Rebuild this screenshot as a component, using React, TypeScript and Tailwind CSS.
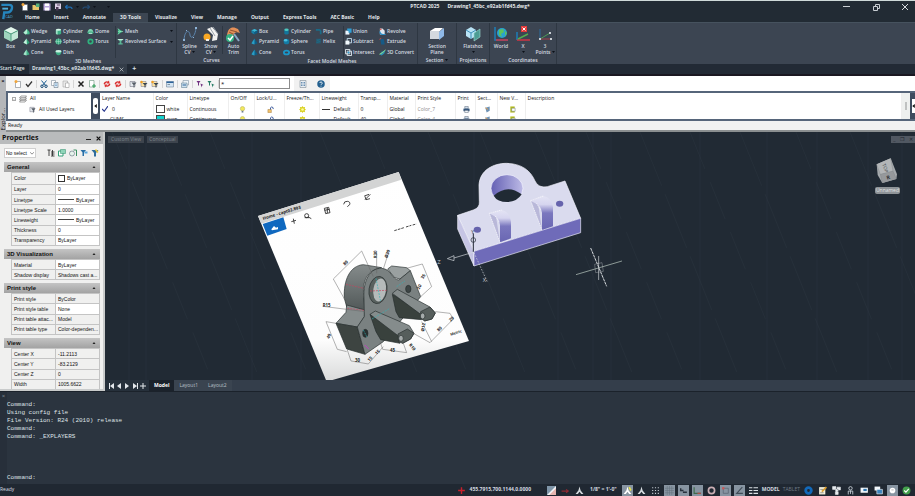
import React, { useState } from 'react';
import clsx from 'clsx';

const icons: Record<string, React.ReactNode> = {
  box: (
    <>
      <path d="M8 1 15 4.500 8 8 1 4.500Z" fill="#e2f6ec" />
      <path d="M1 4.500 8 8V15.500L1 12Z" fill="#9fd3bd" />
      <path d="M15 4.500 8 8V15.500L15 12Z" fill="#c3e8d8" />
      <path d="M8 8V15.500M1 4.500 8 8 15 4.500" stroke="#4d9f80" fill="none" />
    </>
  ),
  wedge: (
    <>
      <path d="M1 11 9 2 15 9V14L6 15Z" fill="#45b98d" />
      <path d="M9 2 10 12 6 15 1 11Z" fill="#b6ecd3" />
    </>
  ),
  pyramid: (
    <>
      <path d="M8 1 15 11 9 15 1 11Z" fill="#33a67c" />
      <path d="M8 1 9 15 1 11Z" fill="#c9f2e0" />
    </>
  ),
  cone: (
    <>
      <path d="M8 1 15 12Q8 17 1 12Z" fill="#43b288" />
      <path d="M8 1 8 15Q3 14 1 12Z" fill="#a5e3ca" />
    </>
  ),
  cylinder: (
    <>
      <path d="M2 4V13Q8 17 14 13V4Z" fill="#3fae86" />
      <path d="M2 4V13Q4 15 6 15V5Z" fill="#9ce0c4" />
      <ellipse cx="8" cy="4" rx="6" ry="2.500" fill="#d4f5e7" />
    </>
  ),
  sphere: (
    <>
      <circle cx="8" cy="8" r="7" fill="#3aa880" />
      <path d="M1 8H15M8 1V15M4 3Q1 8 4 13M12 3Q15 8 12 13" stroke="#b4ecd5" fill="none" />
    </>
  ),
  dish: (
    <>
      <path d="M1 5Q2 14 8 14T15 5Z" fill="#3fae86" />
      <ellipse cx="8" cy="5" rx="7" ry="3" fill="#ccf2e2" />
    </>
  ),
  dome: (
    <>
      <path d="M1 11Q2 2 8 2T15 11Z" fill="#7fd3b0" />
      <ellipse cx="8" cy="11" rx="7" ry="3" fill="#37a57c" />
      <path d="M4 12H12" stroke="#e0fff2" strokeWidth="2" />
    </>
  ),
  torus: <circle cx="8" cy="8" r="5" fill="none" stroke="#2fb27e" strokeWidth="4" />,
  mesh: (
    <>
      <path d="M2 1 14 8 2 15Z" fill="#37b37f" />
      <path d="M2 1 8 8 2 15M2 8H14" stroke="#c9f7e0" fill="none" />
    </>
  ),
  revolved: (
    <>
      <path d="M1 2H15L10 7V12H13V15H3V12H6V7Z" fill="#59b897" />
      <path d="M1 2H15L12 5H4Z" fill="#c5eedd" />
    </>
  ),
  fbox: (
    <>
      <path d="M8 2 15 5 8 9 1 5Z" fill="#39b9d8" />
      <path d="M1 5 8 9V15L1 11Z" fill="#157ea8" />
      <path d="M15 5 8 9V15L15 11Z" fill="#0d5d86" />
    </>
  ),
  fcone: (
    <>
      <path d="M8 1 15 12Q8 17 1 12Z" fill="#0d5d86" />
      <path d="M8 1V15Q3 14 1 12Z" fill="#2c9dc4" />
    </>
  ),
  fcylinder: (
    <>
      <path d="M3 4V13Q8 17 13 13V4Z" fill="#13759c" />
      <ellipse cx="8" cy="4" rx="5" ry="3" fill="#4dc7c0" />
    </>
  ),
  fsphere: (
    <>
      <circle cx="8" cy="8" r="6.500" fill="#147ba4" />
      <ellipse cx="6" cy="5" rx="4" ry="3" fill="#48bfe0" />
    </>
  ),
  ftorus: <ellipse cx="8" cy="8" rx="6" ry="4.500" fill="none" stroke="#1a96c9" strokeWidth="4" />,
  fpipe: <path d="M2 4H10Q13 4 13 8V14" fill="none" stroke="#1a6b88" strokeWidth="4" />,
  fhelix: <path d="M3 3H13L3 7H13L3 11H13" fill="none" stroke="#1a6b88" strokeWidth="2" />,
  union: (
    <>
      <rect x="1" y="6" width="9" height="9" fill="#eaf6ff" />
      <path d="M5 1H15V11H8V6H5Z" fill="#2f9fd6" />
    </>
  ),
  subtract: (
    <>
      <path d="M5 1H15V11H5Z" fill="none" stroke="#cde6f4" strokeWidth="2" />
      <rect x="1" y="6" width="9" height="9" fill="#f3fbff" />
    </>
  ),
  intersect: (
    <>
      <path d="M1 1H11V11H1Z M5 5H15V15H5Z" fill="none" stroke="#eef7fc" strokeWidth="2" />
      <path d="M6 6H10V10H6Z" fill="#2fa0d8" />
    </>
  ),
  revolve: (
    <>
      <path d="M2 1H8L13 6V15H2Z" fill="#dfe6ee" />
      <path d="M2 8Q2 15 10 15H15" fill="none" stroke="#2b8fc8" strokeWidth="3" />
      <circle cx="4" cy="3" r="2" fill="#d25a5a" />
    </>
  ),
  extrude: (
    <>
      <path d="M3 2H11L13 15H5Z" fill="#155a86" />
      <path d="M1 3 5 1" stroke="#d45050" strokeWidth="2" />
    </>
  ),
  convert: (
    <>
      <path d="M1 12 6 6 15 2 12 10 6 15Z" fill="#2a92b8" />
      <path d="M1 12 7 9 15 2" stroke="#9be27c" strokeWidth="2" fill="none" />
    </>
  ),
  spline: (
    <>
      <path d="M2 14C3 2 8 5 8 9S13 12 14 2" stroke="#5d87b0" fill="none" />
      <path d="M1 13h2v2H1ZM13 1h2v2h-2ZM4 4h1v1H4ZM11 11h1v1h-1Z" fill="#8fb5d8" />
    </>
  ),
  show: (
    <>
      <path d="M4 3 9 1 15 8 14 14 9 15 10 9Z" fill="#f4f4f2" />
      <path d="M7 2 12 10M10 1 15 8" stroke="#9aa3ac" fill="none" />
      <circle cx="4" cy="11" r="3.500" fill="#f8a824" />
      <path d="M3 13h3v2H3Z" fill="#eee" />
    </>
  ),
  trim: (
    <>
      <path d="M2 9C3 1 8 0 13 3L15 7C10 5 8 8 8 13Z" fill="#e39059" />
      <path d="M5 4 12 6M4 6 10 9" stroke="#8d5332" fill="none" />
      <path d="M9 8 14 15" stroke="#8aa7c8" strokeWidth="2" />
      <circle cx="5" cy="12" r="4" fill="#35b284" />
      <path d="M3 12 5 14 8 10" fill="none" stroke="#fff" strokeWidth="1.500" />
    </>
  ),
  section: (
    <>
      <path d="M1 5 6 2H14L10 6Z" fill="#fff" />
      <path d="M1 5H10V13H1Z" fill="#d4d9df" />
      <path d="M10 6 15 2V10L10 14Z" fill="#8fb9e8" />
    </>
  ),
  flatshot: (
    <>
      <path d="M1 4 6 1 11 4V10L6 13 1 10Z" fill="#b9e3f5" />
      <path d="M1 4 6 7 11 4M6 7V13" stroke="#3e8fb8" fill="none" />
      <path d="M9 7 15 3V11L9 15Z" fill="#4d9c94" stroke="#9fdcd3" strokeWidth=".6" />
    </>
  ),
  world: (
    <>
      <path d="M2 1V14H15" stroke="#1c7eb8" strokeWidth="1.500" fill="none" />
      <path d="M3 14H15" stroke="#cf3444" strokeWidth="1.500" />
      <circle cx="9" cy="7" r="5" fill="#2aa3cf" />
      <path d="M6 4 10 3 11 6 8 8 9 11 6 9ZM12 5 14 7 12 10Z" fill="#5cc25e" />
    </>
  ),
  ucsx: (
    <>
      <path d="M2 6V14" stroke="#1c7eb8" strokeWidth="1.500" />
      <path d="M2 14H15" stroke="#cf3444" strokeWidth="1.500" />
      <path d="M3 13 13 8" stroke="#53ad4e" strokeWidth="1.500" />
      <path d="M6 0H12V6H6Z" fill="#e33a3a" />
      <path d="M7.500 1.500 10.500 4.500M10.500 1.500 7.500 4.500" stroke="#fff" />
    </>
  ),
  ucs3: (
    <>
      <path d="M3 3V13" stroke="#2c6c9c" />
      <path d="M3 13H14" stroke="#a34048" />
      <path d="M3 13 13 7" stroke="#4d9a55" />
      <path d="M2 12h2v2H2ZM13 12h2v2h-2ZM12 6h2v2h-2Z" fill="#c6ccd2" />
    </>
  ),
  newfile: (
    <>
      <path d="M3 3H13V15H3Z" fill="#fff" stroke="#5f6770" />
      <circle cx="4" cy="3" r="3" fill="#f2a63a" />
    </>
  ),
  open: (
    <>
      <path d="M1 4H6L8 6H14V14H1Z" fill="#e7c66a" />
      <path d="M8 1H15V8H8Z" fill="#58b07a" />
    </>
  ),
  save: (
    <>
      <path d="M1 1H15V15H1Z" fill="#bba9dc" />
      <path d="M4 1H12V6H4ZM4 9H12V15H4Z" fill="#fff" />
    </>
  ),
  saveas: (
    <>
      <path d="M2 1H14V12H2Z" fill="#d9cde2" />
      <path d="M4 8H9V15H4Z" fill="#4a3a55" />
      <path d="M6 4H12" stroke="#584862" strokeWidth="2" />
    </>
  ),
  undo: <path d="M5 4 1 8 5 12M1 8H10Q14 8 14 12" fill="none" stroke="#1f6cb0" strokeWidth="2.500" />,
  redo: <path d="M11 4 15 8 11 12M15 8H6Q2 8 2 12" fill="none" stroke="#234a70" strokeWidth="2.500" />,
  check: <path d="M2 8 6 13 14 3" fill="none" stroke="#333" strokeWidth="2.500" />,
  cut: (
    <>
      <path d="M3 1 11 11M13 1 5 11" stroke="#1d5f94" strokeWidth="2" />
      <circle cx="4" cy="12.500" r="2.500" fill="none" stroke="#174a75" strokeWidth="2" />
      <circle cx="12" cy="12.500" r="2.500" fill="none" stroke="#174a75" strokeWidth="2" />
    </>
  ),
  copy: (
    <>
      <path d="M1 1H9V11H1Z" fill="#fff" stroke="#68788a" />
      <path d="M6 5H14V15H6Z" fill="#dcebf8" stroke="#567" />
      <path d="M8 8H12M8 11H12" stroke="#4a83b5" />
    </>
  ),
  paste: (
    <>
      <path d="M2 2H11V14H2Z" fill="#e9e9e9" stroke="#999" />
      <path d="M7 6H14V15H7Z" fill="#fff" stroke="#888" />
    </>
  ),
  del: <path d="M3 3 13 13M13 3 3 13" stroke="#222" strokeWidth="3" />,
  addpage: (
    <>
      <path d="M3 1H12V14H3Z" fill="#fff" stroke="#4d7c63" />
      <path d="M8 12H16M12 8V16" stroke="#2d9c55" strokeWidth="2" />
    </>
  ),
  regen: (
    <>
      <path d="M1 8Q3 1 10 3L12 1 13 7 7 7 9 5Q5 4 4 9Z" fill="#d92b2b" />
      <path d="M15 8Q13 15 6 13L4 15 3 9 9 9 7 11Q11 12 12 7Z" fill="#d92b2b" />
    </>
  ),
  funnel: (
    <>
      <path d="M2 3H12V13H2Z" fill="#e5e9ee" stroke="#667" />
      <path d="M5 5H15L11 10V15H9V10Z" fill="#555d66" />
    </>
  ),
  funnelstar: (
    <>
      <path d="M2 3H12V13H2Z" fill="#fbe2a6" stroke="#778" />
      <path d="M5 6H15L11 10V15H9V10Z" fill="#35424f" />
      <circle cx="3" cy="4" r="2.500" fill="#f19d20" />
    </>
  ),
  panel: (
    <>
      <path d="M1 3H15V14H1Z" fill="#d3e4f2" stroke="#5b7288" />
      <path d="M1 3H15V6H1Z" fill="#2c639a" />
      <path d="M3 9H8" stroke="#345" />
    </>
  ),
  merge: (
    <>
      <path d="M4 1H15V10H4Z" fill="#eef4f8" stroke="#6c8394" />
      <path d="M1 6H12V15H1Z" fill="#cfe2ee" stroke="#4f7088" />
      <path d="M3 10H10" stroke="#2c639a" strokeWidth="2" />
    </>
  ),
  sheetlist: (
    <>
      <path d="M2 1H14V15H2Z" fill="#e8edf2" stroke="#6a7885" />
      <path d="M4 5H7M4 8H7M4 11H7M9 5H12M9 8H12M9 11H12" stroke="#3f6f9c" strokeWidth="1.500" />
    </>
  ),
  pickp: <path d="M1 2H9L6 6V11H4V6ZM9 7 15 10 12 11 11 15Z" fill="#703080" />,
  pickg: <path d="M1 2H9L6 6V11H4V6ZM9 7 15 10 12 11 11 15Z" fill="#227a62" />,
  help: (
    <>
      <circle cx="8" cy="8" r="7.500" fill="#24608f" />
      <path d="M5.500 6Q6 3.500 8.500 4T10 7.500L8 9.500M8 11.500V13" fill="none" stroke="#fff" strokeWidth="1.800" />
    </>
  ),
  layers: (
    <>
      <path d="M4 2H15L12 6H1Z" fill="#fff" stroke="#444" />
      <path d="M1 10 4 6H15L12 10ZM1 14 4 10H15L12 14Z" fill="#fff" stroke="#444" />
    </>
  ),
  bulb: (
    <>
      <circle cx="8" cy="6" r="5" fill="#f2e85c" stroke="#a8a04a" />
      <path d="M6 11H10V15H6Z" fill="#6e7f8d" />
    </>
  ),
  lock: (
    <>
      <path d="M2 8H10V15H2Z" fill="#f1c16b" stroke="#9c7430" />
      <path d="M8 8V4Q11 0 14 4V7" fill="none" stroke="#2d4d92" strokeWidth="2" />
    </>
  ),
  sun: (
    <>
      <path d="M8 0 10 3 14 2 13 6 16 8 13 10 14 14 10 13 8 16 6 13 2 14 3 10 0 8 3 6 2 2 6 3Z" fill="#d9d01e" />
      <circle cx="8" cy="8" r="3" fill="#fffb9a" />
    </>
  ),
  print: (
    <>
      <path d="M4 1H12V6H4Z" fill="#cfdcea" stroke="#456" />
      <path d="M1 6H15V12H1Z" fill="#35567e" />
      <path d="M4 10H12V15H4Z" fill="#f4f8fc" stroke="#456" />
    </>
  ),
  cutplane: (
    <>
      <path d="M3 4 13 1V11L6 15Z" fill="#6f93b5" />
      <path d="M3 4 9 8" stroke="#e79c4a" strokeWidth="2" />
    </>
  ),
  viewport: (
    <>
      <path d="M3 1H13V15H3Z" fill="#b5bd20" />
      <path d="M6 5H14V12H6Z" fill="#fff" stroke="#566" />
    </>
  ),
  tree: <path d="M1 2H7M4 2V14M8 6H15M8 10H15M8 14H15M11 2V14" stroke="#333" strokeWidth="1.800" fill="none" />,
  select: (
    <>
      <path d="M1 4H10V14H1Z" fill="#fff" stroke="#339f78" strokeWidth="2" />
      <path d="M5 1H15V9H5Z" fill="#8fd4b8" stroke="#2d8c6a" />
    </>
  ),
  quick: (
    <>
      <circle cx="6" cy="9" r="5" fill="#e6f3ec" stroke="#456" />
      <path d="M9 2H15V14" stroke="#3c8f62" strokeWidth="2" fill="none" />
    </>
  ),
  filter: (
    <>
      <path d="M1 2H12L8 7V14H5V7Z" fill="#286ea6" />
      <path d="M9 5H15V9H9Z" fill="#5aa6dc" />
    </>
  ),
  filtery: (
    <>
      <path d="M1 2H15L10 8V15H6V8Z" fill="#2f6d9d" />
      <path d="M9 1 14 7" stroke="#edc93c" strokeWidth="3" />
    </>
  ),
  cross: <path d="M8 2V14M2 8H14" stroke="#c8202c" strokeWidth="2.500" />,
  diag: (
    <>
      <path d="M0 0H16V16H0Z" fill="#f3f5f7" />
      <path d="M0 0H16L0 16Z" fill="#7f95a8" />
      <path d="M4 16 16 4V16Z" fill="#e6b5b0" />
    </>
  ),
  dot: <path d="M1 9H13M9 6 13 9 9 12" stroke="#8c2a32" strokeWidth="2" fill="none" />,
  anno: <path d="M8 1 10 8 15 14 11 14 8 10 5 14H1L6 8Z" fill="#d4dade" />,
  annoy: (
    <>
      <path d="M8 1 10 8 15 14 11 14 8 10 5 14H1L6 8Z" fill="#fff" />
      <path d="M11 2 14 8" stroke="#e8e14a" strokeWidth="3" />
    </>
  ),
  dots: <path d="M2 2h2v2H2ZM7 2h2v2H7ZM12 2h2v2h-2ZM2 7h2v2H2ZM7 7h2v2H7ZM12 7h2v2h-2ZM2 12h2v2H2ZM7 12h2v2H7ZM12 12h2v2h-2Z" fill="#c4ccd4" />,
  grid: <path d="M4 0V16M8 0V16M12 0V16M0 4H16M0 8H16M0 12H16" stroke="#66727f" />,
  ortho: <path d="M3 4V8H8M7 11H14" stroke="#27313d" strokeWidth="2.500" fill="none" />,
  polar: (
    <>
      <path d="M2 2V13H14" stroke="#3f6b4c" strokeWidth="2" fill="none" />
      <path d="M8 13H14" stroke="#bf4a4a" strokeWidth="2" />
    </>
  ),
  ring: <circle cx="8" cy="8" r="5.500" fill="none" stroke="#c9aeb4" strokeWidth="3" />,
  snap: (
    <>
      <path d="M4 4H13V13H4Z" stroke="#4b5663" fill="none" />
      <path d="M2 2H6V6H2Z" fill="#c95757" />
    </>
  ),
  angle: <path d="M13 2 3 13H14" fill="none" stroke="#414d59" strokeWidth="2" />,
  lines: <path d="M0 3H6M8 3H16M0 8H6M8 8H16M0 13H6M8 13H16" stroke="#dbe1e6" strokeWidth="2" />,
  gear: <circle cx="8" cy="8" r="5" fill="none" stroke="#1269ba" strokeWidth="5" />,
  note: (
    <>
      <path d="M2 2H13V15H2Z" fill="#f4f1dd" />
      <path d="M7 10 15 2" stroke="#dc9e2e" strokeWidth="3" />
      <path d="M4 6H9M4 12H10" stroke="#555" />
    </>
  ),
  links: <path d="M1 1H7V6H1ZM9 2H15V7H9ZM6 10H11V15H6ZM5 5 8 11 12 6" fill="#e8ecef" stroke="#e8ecef" />,
  person: (
    <>
      <circle cx="8" cy="4" r="3" fill="none" stroke="#cbd3da" strokeWidth="1.500" />
      <path d="M4 15V9H12V15M8 8V14" stroke="#cbd3da" strokeWidth="1.500" fill="none" />
    </>
  ),
  screen: (
    <>
      <path d="M1 3H14V12H1Z" fill="#f2f7fb" />
      <path d="M6 5H12V9H6Z" fill="#2c74ae" />
    </>
  ),
  screens: (
    <>
      <path d="M1 1H11V8H1Z" fill="#f2f7fb" />
      <path d="M5 6H15V14H5Z" fill="#3f85bd" stroke="#fff" />
    </>
  ),
  lamp: (
    <>
      <circle cx="8" cy="8" r="5" fill="#fff" />
      <path d="M6 7H10" stroke="#888" />
    </>
  ),
  ok: (
    <>
      <circle cx="8" cy="8" r="7" fill="#43a04c" />
      <path d="M4 8 7 11 12 5" stroke="#fff" strokeWidth="2" fill="none" />
    </>
  ),
};

const Icon: React.FC<{ name: string; className?: string }> = ({ name, className }) => (
  <svg viewBox="0 0 16 16" aria-hidden="true" className={clsx('shrink-0', className || 'size-2')}>
    {icons[name]}
  </svg>
);

const Caret: React.FC<{ className?: string }> = ({ className }) => (
  <svg viewBox="0 0 6 4" aria-hidden="true" className={clsx('h-[2px] w-[3px] shrink-0', className)}>
    <path d="M0 0H6L3 4Z" fill="#0c1118" />
  </svg>
);

type Tool = [icon: string, label: string];

const ribbonTabs = ['Home', 'Insert', 'Annotate', '3D Tools', 'Visualize', 'View', 'Manage', 'Output', 'Express Tools', 'AEC Basic', 'Help'];

const meshTools: { width: string; items: Tool[] }[] = [
  { width: 'w-8', items: [['wedge', 'Wedge'], ['pyramid', 'Pyramid'], ['cone', 'Cone']] },
  { width: 'w-8', items: [['cylinder', 'Cylinder'], ['sphere', 'Sphere'], ['dish', 'Dish']] },
  { width: 'w-7', items: [['dome', 'Dome'], ['torus', 'Torus']] },
];

const facetTools: { width: string; items: Tool[] }[] = [
  { width: 'w-8', items: [['fbox', 'Box'], ['fcone', 'Pyramid'], ['fcone', 'Cone']] },
  { width: 'w-8', items: [['fcylinder', 'Cylinder'], ['fsphere', 'Sphere'], ['ftorus', 'Torus']] },
  { width: 'w-7', items: [['fpipe', 'Pipe'], ['fhelix', 'Helix']] },
];

const booleanTools: { width: string; items: Tool[] }[] = [
  { width: 'w-[34px]', items: [['union', 'Union'], ['subtract', 'Subtract'], ['intersect', 'Intersect']] },
  { width: 'w-[38px]', items: [['revolve', 'Revolve'], ['extrude', 'Extrude'], ['convert', '3D Convert']] },
];

const ToolColumn: React.FC<{ width: string; items: Tool[] }> = ({ width, items }) => (
  <div className={clsx('grid h-8 grid-rows-3', width)}>
    {items.map(([icon, label]) => (
      <button key={label} type="button" className="flex items-center gap-px whitespace-nowrap text-left">
        <Icon name={icon} className="size-[7px]" />
        {label}
      </button>
    ))}
  </div>
);

const BigTool: React.FC<{ icon: string; lines: string[]; caret?: boolean; width?: string }> = ({ icon, lines, caret, width }) => (
  <button type="button" className={clsx('flex flex-col items-center leading-[6px]', width || 'w-[21px]')}>
    <Icon name={icon} className="mb-px size-4" />
    {lines.map((line, i) => (
      <span key={line} className="flex items-center gap-px whitespace-nowrap">
        {line}
        {caret && i === lines.length - 1 && lines.length > 1 && <Caret />}
      </span>
    ))}
    {caret && lines.length === 1 && <Caret className="mt-[2px]" />}
  </button>
);

const Group: React.FC<{ title: string; className: string; caret?: boolean; children: React.ReactNode }> = ({ title, className, caret, children }) => (
  <section className={clsx('flex shrink-0 flex-col justify-between border-r border-[#2e3742] pt-[3px]', className)}>
    <div className="flex items-start">{children}</div>
    <h2 className="flex items-center justify-center gap-[2px] pb-px leading-[6px]">
      {title}
      {caret && <Caret />}
    </h2>
  </section>
);

const TitleBar: React.FC<{ tab: string; onTab: (tab: string) => void }> = ({ tab, onTab }) => (
  <header className="flex h-[22px] shrink-0 border-t border-[#cfdad9] bg-[#222b34] text-[#e3e7ea]">
    <svg viewBox="0 0 18 22" aria-hidden="true" className="h-[21px] w-[18px] shrink-0">
      <path d="M1 4H9Q13 4 12 8T7 12H4L3 19" fill="none" stroke="#2585bd" strokeWidth="2.500" />
      <path d="M2 8H8" stroke="#4fb0dc" strokeWidth="2" />
      <text x="5" y="18" fontSize="4" fill="#4fa5cf">CAD</text>
    </svg>
    <div className="flex min-w-0 flex-1 flex-col justify-between">
      <div className="flex h-[11px] items-center">
        <div className="flex flex-1 items-center gap-[3px] pl-[3px]">
          {['newfile', 'open', 'save', 'saveas', 'undo'].map((name) => (
            <button key={name} type="button" aria-label={name}>
              <Icon name={name} />
            </button>
          ))}
          <Caret />
          <button type="button" aria-label="redo">
            <Icon name="redo" />
          </button>
          <Caret />
          <Caret className="ml-2" />
        </div>
        <h1 className="flex gap-2 pl-[10px] text-[5px] font-bold">
          <span>PTCAD 2025</span>
          <span>Drawing1_45bc_e92ab1fd45.dwg*</span>
        </h1>
        <div className="flex flex-1 items-center justify-end gap-[21px] pr-[6px]">
          <button type="button" aria-label="Minimize" className="w-2">
            <span className="block h-px w-[7px] bg-[#c9ced3]" />
          </button>
          <button type="button" aria-label="Restore">
            <svg viewBox="0 0 8 8" className="size-2" fill="none" stroke="#c9ced3">
              <path d="M1.500 3.500h4v4h-4ZM3.500 3V1.500h4v4H6" />
            </svg>
          </button>
          <button type="button" aria-label="Close">
            <svg viewBox="0 0 8 8" className="size-2" stroke="#d5d9dd">
              <path d="M1 1 7 7M7 1 1 7" />
            </svg>
          </button>
        </div>
      </div>
      <nav className="flex h-[9px] items-end">
        {ribbonTabs.map((name) => (
          <button
            key={name}
            type="button"
            onClick={() => onTab(name)}
            className={clsx('h-[9px] whitespace-nowrap px-[7px] text-[5px] leading-[9px] font-bold', name === tab && 'bg-[#3c4652]')}
          >
            {name}
          </button>
        ))}
      </nav>
    </div>
  </header>
);

const Ribbon: React.FC = () => (
  <div className="flex h-[42px] shrink-0 overflow-hidden border-t border-[#46525e] bg-[#3c4552] text-[5px] font-semibold text-[#d5dbe0]">
    <Group title="3D Meshes" className="w-[177px]">
      <BigTool icon="box" lines={['Box']} />
      <div className="flex pl-[2px]">
        {meshTools.map((col) => (
          <ToolColumn key={col.items[0][1]} {...col} />
        ))}
      </div>
      <div className="grid h-8 w-[58px] grid-rows-3 border-l border-[#2e3742] pl-px">
        {[['mesh', 'Mesh'], ['revolved', 'Revolved Surface']].map(([icon, label]) => (
          <button key={label} type="button" className="flex items-center gap-px whitespace-nowrap">
            <Icon name={icon} className="size-[7px]" />
            {label}
            <Caret className="ml-auto" />
          </button>
        ))}
      </div>
    </Group>
    <Group title="Curves" className="w-[70px]">
      <div className="flex w-full justify-between px-[2px]">
        <BigTool icon="spline" lines={['Spline', 'CV']} caret />
        <BigTool icon="show" lines={['Show', 'CV']} caret />
        <span className="h-7 w-px bg-[#2e3742]" />
        <BigTool icon="trim" lines={['Auto', 'Trim']} />
      </div>
    </Group>
    <Group title="Facet Model Meshes" className="w-[171px]">
      <div className="flex pl-1">
        {facetTools.map((col) => (
          <ToolColumn key={col.items[0][1]} {...col} />
        ))}
      </div>
      <div className="flex border-l border-[#2e3742] pl-px">
        {booleanTools.map((col) => (
          <ToolColumn key={col.items[0][1]} {...col} />
        ))}
      </div>
    </Group>
    <Group title="Section" className="w-[39px]" caret>
      <BigTool icon="section" lines={['Section', 'Plane']} width="w-full" />
    </Group>
    <Group title="Projections" className="w-[33px]">
      <BigTool icon="flatshot" lines={['Flatshot']} caret width="w-full" />
    </Group>
    <Group title="Coordinates" className="w-[67px]">
      <div className="flex w-full items-start justify-around">
        <BigTool icon="world" lines={['World']} />
        <BigTool icon="ucsx" lines={['X']} caret />
        <BigTool icon="ucs3" lines={['3', 'Points']} caret />
      </div>
    </Group>
  </div>
);

const DocTabs: React.FC = () => (
  <nav className="flex h-3 shrink-0 items-center border-b-2 border-[#1a1821] bg-[#222a35] text-[5px] text-[#dde1e5]">
    <button type="button" className="w-[29px] text-left font-semibold">Start Page</button>
    <div className="flex h-full items-center gap-[5px] bg-[#343d49] px-[3px] font-bold">
      <button type="button">Drawing1_45bc_e92ab1fd45.dwg*</button>
      <button type="button" aria-label="Close tab">
        <svg viewBox="0 0 8 8" className="size-[5px]" stroke="#d5d9dd">
          <path d="M1 1 7 7M7 1 1 7" />
        </svg>
      </button>
    </div>
    <button type="button" className="px-[5px] text-[7px] leading-[8px] font-bold">+</button>
  </nav>
);

const layerToolbar = [
  ['newfile', 'check'],
  ['cut', 'copy', 'paste'],
  ['del', 'addpage'],
  ['regen', 'regen'],
  ['funnel', 'funnelstar', 'funnelstar'],
  ['panel'],
  ['merge'],
  ['pickp', 'pickg'],
];

const layerColumns: [label: string, width: string][] = [
  ['Layer Name', 'w-[53px]'],
  ['Color', 'w-[34px]'],
  ['Linetype', 'w-[41px]'],
  ['On/Off', 'w-[26px]'],
  ['Lock/U...', 'w-[30px]'],
  ['Freeze/Th...', 'w-[35px]'],
  ['Lineweight', 'w-[39px]'],
  ['Transp...', 'w-[29px]'],
  ['Material', 'w-[28px]'],
  ['Print Style', 'w-[40px]'],
  ['Print', 'w-[20px]'],
  ['Sect...', 'w-[22px]'],
  ['New V...', 'w-[28px]'],
  ['Description', 'w-auto'],
];

const layers = [
  { name: '0', current: true, swatch: 'bg-white', color: 'white', transparency: '0', style: 'Color_7' },
  { name: 'CUMS', current: false, swatch: 'bg-[#12d3cf]', color: 'cyan', transparency: '40', style: 'Color_4' },
];

const LayerExplorer: React.FC = () => (
  <div className="flex h-14 shrink-0 text-[5px] text-[#111]">
    <div className="flex w-[6px] shrink-0 flex-col items-center bg-[#b5b7ba] pt-[2px] pb-[2px]">
      <span className="text-[6px] leading-[6px] font-bold">×</span>
      <span className="mt-auto rotate-180 whitespace-nowrap text-[6px] leading-[6px] [writing-mode:vertical-rl]">Explor...</span>
    </div>
    <div className="flex min-w-0 flex-1 flex-col bg-[#f1f1f1]">
      <div className="flex h-[15px] shrink-0 items-center bg-white">
        <div className="flex h-full items-center bg-[#f4f4f4] pl-[5px]">
          {layerToolbar.map((group, i) => (
            <div key={i} className="flex items-center gap-[3px] border-r border-[#d5d5d5] px-[3px]">
              {group.map((name, j) => (
                <button key={j} type="button" aria-label={name}>
                  <Icon name={name} />
                </button>
              ))}
            </div>
          ))}
        </div>
        <input
          aria-label="Search layers"
          defaultValue="*"
          className="h-[11px] w-[71px] border border-[#8c8c8c] bg-white px-px text-[6px] leading-[6px]"
        />
        <div className="ml-1 flex h-full items-center gap-[10px] bg-[#f1f1f1] px-[5px]">
          <button type="button" aria-label="Settings"><Icon name="sheetlist" /></button>
          <button type="button" aria-label="Help"><Icon name="help" /></button>
        </div>
      </div>
      <div className="flex min-h-0 flex-1 border-y-2 border-l-2 border-[#56657a] bg-[#3f4c5f]">
        <ul className="w-[83px] shrink-0 bg-white pl-1">
          <li className="flex h-[11px] items-center gap-[3px]">
            <span className="flex size-1 items-center justify-center border border-[#aaa] text-[4px] leading-none">-</span>
            <Icon name="layers" />
            All
          </li>
          <li className="flex h-[11px] items-center gap-[3px] pl-[17px]">
            <Icon name="funnel" className="size-[7px]" />
            All Used Layers
          </li>
        </ul>
        <div className="flex w-[9px] shrink-0 items-center justify-center">
          <button type="button" aria-label="Collapse tree" className="flex h-4 w-[5px] items-center justify-center rounded-xs bg-white">
            <svg viewBox="0 0 4 6" className="h-1 w-[3px]"><path d="M4 0V6L0 3Z" fill="#111" /></svg>
          </button>
        </div>
        <div className="min-w-0 flex-1 overflow-hidden bg-white">
          <table className="w-full table-fixed text-left leading-[7px]">
            <thead>
              <tr className="h-[11px]">
                {layerColumns.map(([label, width]) => (
                  <th key={label} className={clsx('overflow-hidden whitespace-nowrap border-r border-[#eee] p-0 pl-[2px] font-normal', width)}>
                    {label}
                  </th>
                ))}
              </tr>
            </thead>
            <tbody>
              {layers.map((layer) => (
                <tr key={layer.name} className="h-[10px] *:overflow-hidden *:whitespace-nowrap *:border-r *:border-[#eee] *:p-0 *:pl-[2px]">
                  <td>
                    <span className="flex items-center gap-1">
                      {layer.current ? (
                        <svg viewBox="0 0 8 8" className="size-[6px]" fill="none" stroke="#29388f" strokeWidth="1.500">
                          <path d="M0 4 3 7 8 0" />
                        </svg>
                      ) : (
                        <span className="w-1" />
                      )}
                      {layer.name}
                    </span>
                  </td>
                  <td>
                    <span className="flex items-center gap-[2px]">
                      <span className={clsx('h-2 w-[9px] shrink-0 border border-[#444]', layer.swatch)} />
                      {layer.color}
                    </span>
                  </td>
                  <td>Continuous</td>
                  <td><Icon name="bulb" className="mx-auto size-[7px]" /></td>
                  <td><Icon name="lock" className="mx-auto size-[7px]" /></td>
                  <td><Icon name="sun" className="mx-auto size-[7px]" /></td>
                  <td>
                    <span className="flex items-center gap-1">
                      <span className="h-px w-2 bg-[#333]" />
                      Default
                    </span>
                  </td>
                  <td>{layer.transparency}</td>
                  <td>Global</td>
                  <td className="text-[#8b8b8b]">{layer.style}</td>
                  <td><Icon name="print" className="mx-auto size-[7px]" /></td>
                  <td><Icon name="cutplane" className="mx-auto size-[7px]" /></td>
                  <td><Icon name="viewport" className="mx-auto size-[7px]" /></td>
                  <td />
                </tr>
              ))}
            </tbody>
          </table>
        </div>
        <div className="flex w-2 shrink-0 items-center justify-center bg-[#eef0ef]">
          <span className="h-2 w-[2px] bg-[#bfc1c1]" />
        </div>
        <div className="flex w-[5px] shrink-0 items-center">
          <span className="ml-[2px] flex h-[14px] flex-1 items-center bg-white">
            <svg viewBox="0 0 4 6" className="h-1 w-[3px]"><path d="M4 0V6L0 3Z" fill="#111" /></svg>
          </span>
        </div>
      </div>
      <p className="flex h-[11px] shrink-0 items-center border-b-2 border-[#8b8f90] pl-[2px] text-[5px]">Ready</p>
    </div>
  </div>
);

interface PropertySection {
  title: string;
  height: string;
  rows: { label: string; value: string; mark?: 'swatch' | 'line'; readOnly?: boolean }[];
}

const sections: PropertySection[] = [
  {
    title: 'General',
    height: 'h-[74px]',
    rows: [
      { label: 'Color', value: 'ByLayer', mark: 'swatch' },
      { label: 'Layer', value: '0' },
      { label: 'Linetype', value: 'ByLayer', mark: 'line' },
      { label: 'Linetype Scale', value: '1.0000' },
      { label: 'Lineweight', value: 'ByLayer', mark: 'line' },
      { label: 'Thickness', value: '0' },
      { label: 'Transparency', value: 'ByLayer' },
    ],
  },
  {
    title: '3D Visualization',
    height: 'h-[21px]',
    rows: [
      { label: 'Material', value: 'ByLayer' },
      { label: 'Shadow display', value: 'Shadows cast a...', readOnly: true },
    ],
  },
  {
    title: 'Print style',
    height: 'h-[42px]',
    rows: [
      { label: 'Print style', value: 'ByColor', readOnly: true },
      { label: 'Print style table', value: 'None' },
      { label: 'Print table attac...', value: 'Model', readOnly: true },
      { label: 'Print table type', value: 'Color-dependen...', readOnly: true },
    ],
  },
  {
    title: 'View',
    height: 'h-[42px]',
    rows: [
      { label: 'Center X', value: '-11.2113', readOnly: true },
      { label: 'Center Y', value: '-83.2129', readOnly: true },
      { label: 'Center Z', value: '0', readOnly: true },
      { label: 'Width', value: '1005.6622', readOnly: true },
    ],
  },
];

const PropertiesPanel: React.FC = () => (
  <aside className="w-[105px] shrink-0 overflow-hidden border-r-2 border-b-2 border-[#c9cbcb] bg-[#f0f0ef] font-['Liberation_Sans',sans-serif] text-[5px] text-[#111]">
    <div className="flex h-3 items-center bg-[#b9bbbc] px-[2px] font-['Open_Sans',sans-serif]">
      <h2 className="text-[7px] leading-[8px] font-bold">Properties</h2>
      <button type="button" aria-label="Minimize panel" className="ml-auto mr-[5px]">
        <span className="mt-[3px] block h-px w-[5px] bg-[#222]" />
      </button>
      <button type="button" aria-label="Close panel">
        <svg viewBox="0 0 8 8" className="size-[5px]" stroke="#111" strokeWidth="2"><path d="M1 1 7 7M7 1 1 7" /></svg>
      </button>
    </div>
    <div className="flex h-[18px] items-center gap-[3px] pl-1">
      <div className="relative mr-2">
        <select aria-label="Selection" className="h-[10px] w-8 appearance-none border border-[#d0d0d0] bg-white pl-px text-[5px] leading-[8px]">
          <option>No select</option>
        </select>
        <svg viewBox="0 0 6 4" className="pointer-events-none absolute top-1 right-[2px] h-[3px] w-1" fill="none" stroke="#555">
          <path d="M0 0 3 3 6 0" />
        </svg>
      </div>
      {['tree', 'select', 'quick', 'filter', 'filtery'].map((name) => (
        <button key={name} type="button" aria-label={name}>
          <Icon name={name} />
        </button>
      ))}
    </div>
    <div className="space-y-[3px] pr-[3px] pl-1">
      {sections.map((section) => (
        <section key={section.title}>
          <h3 className="flex h-[10px] items-center justify-between bg-linear-to-b from-[#c4c4c4] to-[#a3a3a3] pr-1 pl-[3px] text-[6px] leading-[8px] font-bold">
            {section.title}
            <svg viewBox="0 0 6 4" aria-hidden="true" className="h-[2px] w-1"><path d="M0 4H6L3 0Z" fill="#222" /></svg>
          </h3>
          <table className={clsx('ml-[7px] w-[89px] table-fixed text-left leading-[6px]', section.height)}>
            <tbody>
              {section.rows.map((row) => (
                <tr key={row.label} className="border border-[#c4c4c4]">
                  <th className="w-11 truncate border-r border-[#c4c4c4] p-0 pl-[2px] font-normal">{row.label}</th>
                  <td className={clsx('truncate p-0 pl-[2px]', !row.readOnly && 'bg-white')}>
                    <span className="flex items-center gap-[2px]">
                      {row.mark === 'swatch' && <span className="size-[7px] border border-[#333] bg-white" />}
                      {row.mark === 'line' && <span className="h-px w-4 bg-[#444]" />}
                      {row.value}
                    </span>
                  </td>
                </tr>
              ))}
            </tbody>
          </table>
        </section>
      ))}
    </div>
  </aside>
);

// Scanned drawing of the bracket, attached as a tilted sheet
const ReferenceSheet: React.FC = () => (
  <g transform="translate(250 165) scale(.3333)">
    <path d="M24 153 446 21 657 528 230 650Z" fill="url(#sheet)" />
    <path d="M24 153 446 21 454 44 34 176Z" fill="#d3d4d4" />
    <path d="M38 177 100 157 110 192 52 212Z" fill="#0f68bf" />
    <path d="M64 193 72 183 78 188 84 186V193L66 196Z" fill="#fff" />
    <text x="40" y="165" transform="rotate(-17 40 165)" fontSize="13" fontWeight="700" fill="#222">Home - capt02.893</text>
    <g stroke="#222" strokeWidth="2.500" fill="none">
      <path d="M124 170 138 166M130 161 133 176" />
      <circle cx="170" cy="152" r="6" /><path d="M175 156 184 161M164 158H177" />
      <path d="M223 130 236 127 240 143 227 146ZM224 136 238 133M232 129V144" />
      <path d="M281 118Q282 108 292 109T299 119L292 125" />
      <path d="M343 93 357 88M345 104 361 88M345 94 348 104 360 101" />
      <path d="M433 197 462 188M468 186 484 181M488 180 499 177" strokeDasharray="8 3" />
    </g>
    <g stroke="#262d2d" strokeWidth="2" strokeLinejoin="round">
      <path d="M283 400C280 345 300 302 340 299L395 308C350 315 335 350 342 400L345 440 290 425Z" fill="url(#barrel)" />
      <path d="M258 475 288 442 290 420 345 435 343 455 322 486Z" fill="#858c8c" />
      <path d="M258 475 322 486 345 568 290 552Z" fill="#3d4441" />
      <path d="M413 312 425 303 470 308 481 317 450 342 434 338Z" fill="#9aa0a0" />
      <path d="M322 486 343 455 342 400C338 345 362 308 395 310 425 312 425 345 447 345L481 317 512 395 400 530 345 568Z" fill="#7a8181" />
      <ellipse cx="384" cy="375" rx="27" ry="41" transform="rotate(8 384 375)" fill="#59615f" />
      <ellipse cx="389" cy="375" rx="19" ry="35" transform="rotate(8 389 375)" fill="#b5baba" stroke="none" />
      <path d="M427 388 438 440 448 458 515 464 510 440Z" fill="#39413d" />
      <path d="M427 385 442 373 540 426 556 444 546 462 524 468 512 448Z" fill="#858c8c" />
      <path d="M512 440 540 426 556 444 546 462 524 468 512 460Z" fill="#565e5c" />
      <path d="M360 448 378 500 392 524 450 535 444 505Z" fill="#39413d" />
      <path d="M360 448 376 438 478 482 492 505 482 522 458 535 444 512Z" fill="#858c8c" />
      <path d="M444 507 472 492 492 505 482 522 458 535 446 530Z" fill="#565e5c" />
      <ellipse cx="518" cy="453" rx="7" ry="9" fill="#a5abab" />
      <ellipse cx="453" cy="520" rx="7" ry="9" fill="#a5abab" />
      <ellipse cx="346" cy="505" rx="8" ry="12" fill="#2a3030" />
      <ellipse cx="475" cy="372" rx="8" ry="11" fill="#3d4545" />
    </g>
    <g stroke="#666" strokeWidth="1.500" fill="none">
      <path d="M335 258 250 342 285 405M335 258 370 335M380 262V325M415 265 400 312M218 424 345 440M228 470 262 553 290 560M258 475 228 470M292 555 303 588 355 597 400 545M390 530 398 553 470 563 460 535M470 310 517 297 545 365 512 395M490 505 540 533 610 462 600 445 556 440M515 470 545 530" />
    </g>
    <path d="M288 358 342 370M292 430 342 436M360 378 410 376" stroke="#c4455d" strokeWidth="2" strokeDasharray="6 3" />
    <path d="M378 340 392 410M340 495 352 518M366 462 420 430M440 365 465 348" stroke="#34b1b5" strokeWidth="2" strokeDasharray="6 3" />
    <path d="M344 540 356 552" stroke="#c03fc0" strokeWidth="3" />
    <g fontSize="13" fontWeight="700" fill="#222">
      <text x="218" y="425">R15</text>
      <text x="284" y="302" transform="rotate(-42 284 302)">80</text>
      <text x="380" y="280" transform="rotate(-88 380 280)">R30</text>
      <text x="412" y="280" transform="rotate(-70 412 280)">Ø30</text>
      <text x="238" y="522" transform="rotate(-70 238 522)">40</text>
      <text x="315" y="592">30</text>
      <text x="358" y="590" transform="rotate(-45 358 590)">15</text>
      <text x="380" y="570" transform="rotate(-45 380 570)">15</text>
      <text x="420" y="560">45</text>
      <text x="476" y="540" transform="rotate(50 476 540)">R10</text>
      <text x="508" y="374" transform="rotate(-60 508 374)">20</text>
      <text x="520" y="343" transform="rotate(-60 520 343)">35</text>
      <text x="522" y="500" transform="rotate(-80 522 500)">Ø12</text>
      <text x="566" y="500" transform="rotate(-45 566 500)">80</text>
      <text x="602" y="470" transform="rotate(-45 602 470)">20</text>
      <text x="602" y="512" transform="rotate(-17 602 512)" fontSize="11">Metric</text>
    </g>
  </g>
);

const BracketModel: React.FC = () => (
  <g transform="translate(430 130) scale(.3333)">
    <path d="M83 256 130 240Q150 233 148 215L147 165C150 120 190 100 230 100 275 101 302 122 315 153Q325 175 352 170L405 153 452 265 132 364Z" fill="#dadbee" stroke="#f6f6ff" strokeWidth="2" />
    <path d="M83 256 132 364V408L83 297Z" fill="#c6c5e4" stroke="#f6f6ff" strokeWidth="2" />
    <path d="M132 364 452 265V308L132 408Z" fill="#6f6bb9" stroke="#eeeefc" strokeWidth="2" />
    <ellipse cx="231" cy="175" rx="48" ry="41" fill="url(#bore)" stroke="#f4f4ff" strokeWidth="2" />
    <path d="M191 197Q232 160 275 193 262 215 232 216 202 216 191 197Z" fill="#202a34" />
    <ellipse cx="142" cy="299" rx="11" ry="9" fill="#6663ac" />
    <ellipse cx="389" cy="221" rx="11" ry="9" fill="#6663ac" />
    <path d="M178 250 196 245 210 337Z" fill="#b9b8d9" />
    <path d="M178 250 215 240Q240 246 243 275V325L210 337V285Q206 262 196 260Z" fill="url(#lug)" />
    <path d="M302 212 322 205 336 300Z" fill="#b9b8d9" />
    <path d="M302 212 340 198Q366 203 369 232V289L336 300V248Q332 225 320 222Z" fill="url(#lug)" />
    <path d="M178 250 210 337M302 212 336 300M178 250 215 240M302 212 340 198M196 258 207 275M320 220 332 240" stroke="#fff" strokeWidth="2" strokeDasharray="4 2" fill="none" />
    <g stroke="#d7dbe0" strokeWidth="2" fill="none">
      <path d="M130 310V366" stroke="#232a35" strokeWidth="3" />
      <circle cx="130" cy="330" r="7" stroke="#232a35" />
      <path d="M132 366 72 384M72 377 52 386 72 392Z" />
      <path d="M132 368 172 456" strokeDasharray="5 4" />
    </g>
    <text x="22" y="401" fontSize="18" fill="#c8cdd3">Z</text>
    <text x="124" y="312" fontSize="14" fill="#232a35">Y</text>
    <text x="158" y="456" fontSize="17" fill="#c8cdd3">X</text>
    <g stroke="#d5d9dc" strokeWidth="3" fill="none">
      <path d="M438 434 576 393" stroke="#8d9a97" />
      <path d="M482 354 530 469" strokeDasharray="9 2" />
      <path d="M506 378V450" strokeWidth="2" />
      <path d="M494 403 516 398 520 424 497 428Z" strokeWidth="1" />
    </g>
  </g>
);

const ViewCube: React.FC = () => (
  <svg viewBox="0 0 72 120" aria-hidden="true" className="h-10 w-6">
    <path d="M5 28 47 10 66 58 64 72 22 84 8 60Z" fill="#a5a9ac" />
    <path d="M5 28 47 10 54 48 16 58Z" fill="#b3b6b8" />
    <path d="M16 58 54 48 64 72 22 84Z" fill="#96999c" />
    <path d="M5 28 16 58 54 48 47 10M16 58 22 84M54 48 64 72" fill="none" stroke="#777c80" />
    <text x="22" y="28" fontSize="14" transform="rotate(72 22 28)" fill="#45494d">TOP</text>
    <text x="36" y="74" fontSize="16" transform="rotate(-15 36 74)" fontWeight="700" fill="#303438">R</text>
  </svg>
);

const Drawing: React.FC = () => (
  <div className="relative min-h-0 flex-1 overflow-hidden bg-[#212a34]">
    <svg viewBox="105 132 810 248" preserveAspectRatio="xMinYMin slice" className="block h-full w-full" role="img" aria-label="3D model viewport">
      <defs>
        <linearGradient id="sheet" x1="0" y1="0" x2="0" y2="1">
          <stop offset="0" stopColor="#fff" />
          <stop offset=".8" stopColor="#fdfdfd" />
          <stop offset="1" stopColor="#d9dada" />
        </linearGradient>
        <linearGradient id="barrel" x1="0" y1="0" x2="0" y2="1">
          <stop offset="0" stopColor="#858b8b" />
          <stop offset="1" stopColor="#505757" />
        </linearGradient>
        <linearGradient id="bore" x1="0" y1="0" x2="1" y2="0">
          <stop offset="0" stopColor="#6460b4" />
          <stop offset="1" stopColor="#bdbbe6" />
        </linearGradient>
        <linearGradient id="lug" x1="0" y1="0" x2="0" y2="1">
          <stop offset="0" stopColor="#e4e4f4" />
          <stop offset=".25" stopColor="#d6d5ef" />
          <stop offset=".5" stopColor="#7a77be" />
          <stop offset="1" stopColor="#6966b2" />
        </linearGradient>
      </defs>
      <g stroke="#2d3741" strokeWidth=".5">
        {[129, 146, 252, 301, 474, 558, 593, 611, 700, 767, 817, 868, 902].map((x) => (
          <path key={x} d={`M${x} 132V380`} />
        ))}
        {[112, 160, 210, 320, 370, 428, 480, 535, 586, 640, 690, 740, 796, 850].map((x, i) => (
          <path key={x} d={`M${x} 132L${x + 100} 380`} strokeDasharray={i % 2 ? '58 9' : '40 14'} />
        ))}
      </g>
      <ReferenceSheet />
      <BracketModel />
    </svg>
    <div className="absolute top-1 left-[3px] flex gap-[3px] text-[5px] leading-[7px] text-[#7e868d]">
      <button type="button" className="bg-[#3d444d] px-[3px]">Custom View</button>
      <button type="button" className="bg-[#3d444d] px-[2px]">Conceptual</button>
    </div>
    <div className="absolute top-1 right-0 flex h-[7px] w-6 items-center justify-around bg-[#515862] text-[5px] leading-none text-[#1f262e]">
      <span>_</span>
      <span>❐</span>
      <span>✕</span>
    </div>
    <div className="absolute top-[23px] right-[15px] flex flex-col items-center">
      <ViewCube />
      <button type="button" className="-mt-2 rounded-xs bg-[#8f9498] px-px text-[5px] leading-[7px] text-[#e2e4e6]">Unnamed</button>
    </div>
  </div>
);

const LayoutTabs: React.FC = () => {
  const [active, setActive] = useState('Model');
  return (
    <nav className="flex h-[11px] shrink-0 items-center bg-[#343e4b] text-[5px] text-[#b9c0c8]">
      <div className="flex h-full items-center bg-[#26303b] px-[2px] text-white">
        {['M1 0H2V6H1ZM6 0V6L2 3Z', 'M5 0V6L1 3Z', 'M1 0V6L5 3Z', 'M5 0H6V6H5ZM1 0V6L5 3Z', 'M2.500 0H3.500V2.500H6V3.500H3.500V6H2.500V3.500H0V2.500H2.500Z'].map((d) => (
          <button key={d} type="button" aria-label="Layout navigation" className="px-px">
            <svg viewBox="0 0 6 6" className="size-[6px]"><path d={d} fill="#e3e7eb" /></svg>
          </button>
        ))}
      </div>
      {['Model', 'Layout1', 'Layout2'].map((name) => (
        <button
          key={name}
          type="button"
          onClick={() => setActive(name)}
          className={clsx('h-full px-[5px] leading-[9px]', active === name ? 'bg-[#1b222b] font-bold text-white' : 'bg-[#3a4450]')}
        >
          {name}
        </button>
      ))}
    </nav>
  );
};

const CommandLine: React.FC = () => (
  <div className="flex h-[93px] shrink-0 border-t border-[#1b222b] bg-[#2b343f] font-['Liberation_Mono',monospace] text-[6px] leading-[8px] text-[#dfe3e7]">
    <div className="w-[7px] shrink-0 bg-[#272f3a] text-center font-['Open_Sans',sans-serif] text-[#8c949d]">×</div>
    <div className="flex min-w-0 flex-1 flex-col justify-between pt-[9px] pb-[2px]">
      <pre className="font-[inherit]">{`Command:
Using config file
File Version: R24 (2010) release
Command:
Command: _EXPLAYERS`}</pre>
      <label className="flex items-center">
        Command:
        <input className="ml-1 h-2 flex-1 bg-transparent outline-none" />
      </label>
    </div>
  </div>
);

const StatusIcon: React.FC<{ name: string; boxed?: boolean }> = ({ name, boxed }) => (
  <button type="button" aria-label={name} className={clsx('flex h-[11px] w-[11px] items-center justify-center', boxed && 'bg-[#8794a1]')}>
    <Icon name={name} className="size-[9px]" />
  </button>
);

const StatusBar: React.FC = () => (
  <footer className="flex h-3 shrink-0 items-center bg-[#202832] text-[5px] text-[#d6dbe0]">
    <span>Ready</span>
    <div className="ml-auto flex items-center gap-[3px] whitespace-nowrap pr-[3px]">
      <StatusIcon name="cross" />
      <span className="mr-3 font-bold">455.7915,700.1144,0.0000</span>
      <StatusIcon name="diag" />
      <StatusIcon name="dot" />
      <StatusIcon name="anno" />
      <span className="px-[2px] font-bold">1/8" = 1'-0"</span>
      <StatusIcon name="annoy" boxed />
      <StatusIcon name="anno" />
      <StatusIcon name="dots" />
      <StatusIcon name="grid" boxed />
      <StatusIcon name="ortho" boxed />
      <StatusIcon name="polar" boxed />
      <StatusIcon name="ring" />
      <StatusIcon name="snap" boxed />
      <StatusIcon name="angle" boxed />
      <StatusIcon name="lines" />
      <button type="button" className="font-bold">MODEL</button>
      <button type="button" className="text-[#6f7984]">TABLET</button>
      {['gear', 'note', 'links', 'person', 'screen', 'screens'].map((name) => (
        <StatusIcon key={name} name={name} />
      ))}
      <StatusIcon name="lamp" boxed />
      <StatusIcon name="ok" />
    </div>
  </footer>
);

export default function App() {
  const [tab, setTab] = useState('3D Tools');

  return (
    <div className="flex h-screen flex-col overflow-hidden bg-[#212a34] font-['Open_Sans',sans-serif]">
      <TitleBar tab={tab} onTab={setTab} />
      <Ribbon />
      <DocTabs />
      <LayerExplorer />
      <main className="flex min-h-0 flex-1">
        <PropertiesPanel />
        <div className="flex min-w-0 flex-1 flex-col">
          <Drawing />
          <LayoutTabs />
        </div>
      </main>
      <CommandLine />
      <StatusBar />
    </div>
  );
}
